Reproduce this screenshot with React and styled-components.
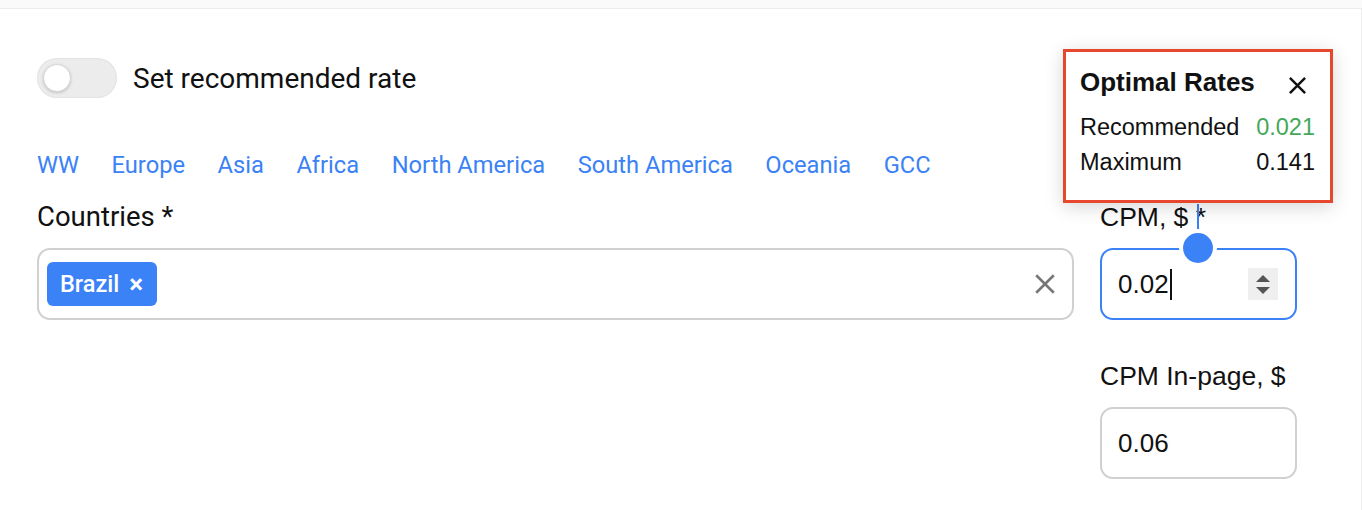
import React from "react";
import styled, { createGlobalStyle } from "styled-components";

const Global = createGlobalStyle`
  html, body { margin: 0; padding: 0; background: #fff; }
  body { font-family: Roboto, "Liberation Sans", Arial, sans-serif; color: #111; }
  * { box-sizing: border-box; }
`;

const TopStrip = styled.div`
  height: 9px;
  background: #fafafa;
  border-bottom: 1px solid #ececec;
`;

const Card = styled.div`
  width: 1362px;
  height: 501px;
  padding: 49px 64px 0 37px;
  border-right: 1px solid #ededed;
`;

const ToggleRow = styled.label`
  display: flex;
  align-items: center;
  gap: 16px;
  height: 40px;
  font-size: 28px;
  color: #111;
`;

const Track = styled.span`
  position: relative;
  display: inline-block;
  width: 80px;
  height: 40px;
  border-radius: 20px;
  background: #ececec;
  box-shadow: inset 0 0 2px rgba(0, 0, 0, 0.12);
`;

const Knob = styled.span`
  position: absolute;
  left: 6px;
  top: 6px;
  width: 28px;
  height: 28px;
  border-radius: 50%;
  background: #fff;
  border: 1px solid #d6d6d6;
  box-shadow: 0 1px 3px rgba(0, 0, 0, 0.18);
`;

const Regions = styled.nav`
  display: flex;
  gap: 32.5px;
  margin-top: 52px;
  height: 30px;
  align-items: center;
`;

const RegionLink = styled.a`
  font-size: 23.7px;
  font-weight: 400;
  color: #3b82f6;
  text-decoration: none;
  line-height: 30px;
`;

const FormGrid = styled.div`
  display: grid;
  grid-template-columns: 1037px 197px;
  column-gap: 26px;
  margin-top: 22px;
`;

const Field = styled.div`
  position: relative;
  display: flex;
  flex-direction: column;
  gap: 16px;
`;

const Column = styled.div`
  display: flex;
  flex-direction: column;
  gap: 41px;
`;

const Label = styled.div`
  font-family: ${(p) => (p.$alt ? '"Liberation Sans", Arial, sans-serif' : "Roboto, sans-serif")};
  font-size: ${(p) => (p.$alt ? "26.5px" : "27.5px")};
  line-height: 30px;
  height: 30px;
  color: #111;
`;

const Box = styled.div`
  position: relative;
  display: flex;
  align-items: center;
  height: 72px;
  border: ${(p) => (p.$focused ? "2px solid #3b82f6" : "2px solid #d0d0d0")};
  border-radius: 13px;
  background: #fff;
  padding: 0 16px 0 ${(p) => (p.$tags ? "8px" : "16px")};
`;

const Chips = styled.div`
  flex: 1;
  display: flex;
  gap: 8px;
`;

const Chip = styled.span`
  display: inline-flex;
  align-items: center;
  gap: 10px;
  height: 44px;
  padding: 0 14px 0 13px;
  border-radius: 6px;
  background: #3b82f6;
  color: #fff;
  font-size: 23.5px;
  font-weight: 500;
`;

const ChipX = styled.span`
  font-size: 26px;
  font-weight: 700;
  line-height: 1;
`;

const Value = styled.span`
  flex: 1;
  display: flex;
  align-items: center;
  font-family: "Liberation Sans", Arial, sans-serif;
  font-size: 26px;
  color: #111;
`;

const Caret = styled.span`
  display: inline-block;
  width: 2px;
  height: 31px;
  background: #111;
  margin-left: 1px;
`;

const Spinner = styled.span`
  display: flex;
  flex-direction: column;
  align-items: center;
  justify-content: center;
  gap: 5px;
  width: 30px;
  height: 32px;
  background: #efefef;
  margin-right: 1px;
`;

const Tri = styled.span`
  width: 0;
  height: 0;
  border-left: 7px solid transparent;
  border-right: 7px solid transparent;
  ${(p) => (p.$up ? "border-bottom: 7px solid #555;" : "border-top: 7px solid #555;")}
`;

const Connector = styled.span`
  position: absolute;
  left: 95px;
  top: -46px;
  width: 2px;
  height: 46px;
  background: #3b82f6;
`;

const Dot = styled.span`
  position: absolute;
  left: 77px;
  top: -21px;
  width: 38px;
  height: 38px;
  border-radius: 50%;
  background: #3b82f6;
  border: 4px solid #fff;
`;

const Popover = styled.div`
  position: absolute;
  left: -37px;
  top: -153px;
  width: 270px;
  height: 154px;
  border: 3px solid #e5482d;
  background: #fff;
  box-shadow: 0 4px 18px rgba(0, 0, 0, 0.16);
  padding: 15px 15px 0 14px;
  font-family: "Liberation Sans", Arial, sans-serif;
  z-index: 2;
`;

const PopHead = styled.div`
  display: flex;
  align-items: center;
  justify-content: space-between;
  height: 30px;
  margin-bottom: 13px;
`;

const PopTitle = styled.span`
  font-size: 26px;
  font-weight: 700;
  color: #111;
`;

const CloseBtn = styled.span`
  display: flex;
  margin-right: 8px;
  margin-top: 6px;
`;

const RateRow = styled.div`
  display: flex;
  justify-content: space-between;
  align-items: center;
  height: 35px;
  font-size: 23.5px;
  color: #111;
`;

const RateValue = styled.span`
  color: ${(p) => p.$color || "#111"};
`;

const XIcon = ({ size, color, width }) => (
  <svg width={size} height={size} viewBox="0 0 20 20" fill="none">
    <path d="M2 2 L18 18 M18 2 L2 18" stroke={color} strokeWidth={width} strokeLinecap="butt" />
  </svg>
);

const regions = ["WW", "Europe", "Asia", "Africa", "North America", "South America", "Oceania", "GCC"];

export default function App() {
  return (
    <>
      <Global />
      <TopStrip />
      <Card>
        <ToggleRow>
          <Track>
            <Knob />
          </Track>
          Set recommended rate
        </ToggleRow>
        <Regions>
          {regions.map((r) => (
            <RegionLink key={r} href="#">{r}</RegionLink>
          ))}
        </Regions>
        <FormGrid>
          <Field>
            <Label>Countries *</Label>
            <Box $tags>
              <Chips>
                <Chip>
                  Brazil <ChipX>×</ChipX>
                </Chip>
              </Chips>
              <XIcon size={22} color="#777" width={2.4} />
            </Box>
          </Field>
          <Column>
            <Field>
              <Popover>
                <PopHead>
                  <PopTitle>Optimal Rates</PopTitle>
                  <CloseBtn>
                    <XIcon size={19} color="#111" width={2.6} />
                  </CloseBtn>
                </PopHead>
                <RateRow>
                  <span>Recommended</span>
                  <RateValue $color="#43a85a">0.021</RateValue>
                </RateRow>
                <RateRow>
                  <span>Maximum</span>
                  <RateValue>0.141</RateValue>
                </RateRow>
              </Popover>
              <Label $alt>CPM, $ *</Label>
              <Box $focused>
                <Connector />
                <Dot />
                <Value>
                  0.02
                  <Caret />
                </Value>
                <Spinner>
                  <Tri $up />
                  <Tri />
                </Spinner>
              </Box>
            </Field>
            <Field>
              <Label $alt>CPM In-page, $</Label>
              <Box>
                <Value>0.06</Value>
              </Box>
            </Field>
          </Column>
        </FormGrid>
      </Card>
    </>
  );
}
